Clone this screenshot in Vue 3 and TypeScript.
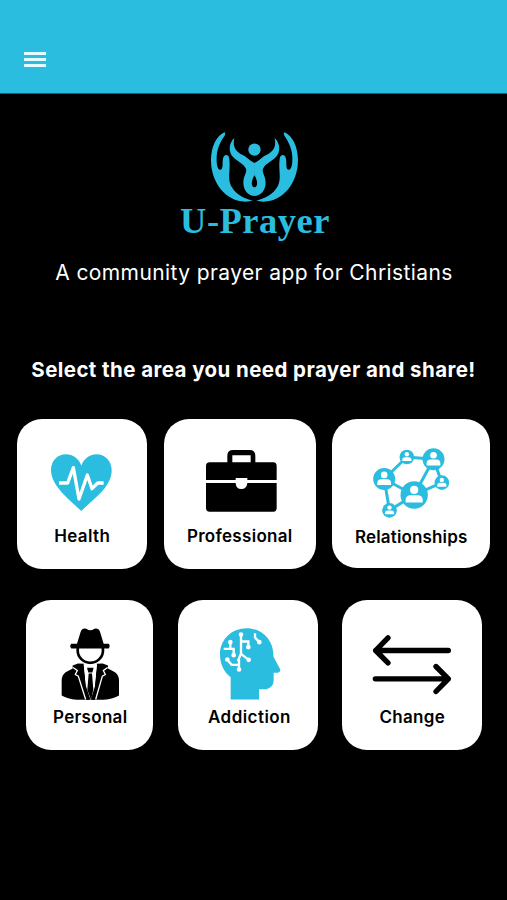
<script setup lang="ts">
interface Area {
  id: string
  label: string
  viewBox: string
}

const rows: Area[][] = [
  [
    { id: 'health', label: 'Health', viewBox: '84 105 270 228' },
    { id: 'professional', label: 'Professional', viewBox: '105 105 270 228' },
    { id: 'relationships', label: 'Relationships', viewBox: '124.5 106 270 228' },
  ],
  [
    { id: 'personal', label: 'Personal', viewBox: '88 106.5 270 228' },
    { id: 'addiction', label: 'Addiction', viewBox: '98 106.5 270 228' },
    { id: 'change', label: 'Change', viewBox: '97 106.5 270 228' },
  ],
]

const links: number[][] = [
  [179, 208, 247, 142],
  [247, 142, 327, 149],
  [327, 149, 352, 219],
  [327, 149, 269, 256],
  [352, 219, 269, 256],
  [179, 208, 269, 256],
  [179, 208, 195, 302],
  [195, 302, 269, 256],
]

const people: { x: number; y: number; r: number }[] = [
  { x: 247, y: 142, r: 22 },
  { x: 327, y: 149, r: 33 },
  { x: 179, y: 208, r: 33 },
  { x: 352, y: 219, r: 22 },
  { x: 269, y: 256, r: 41 },
  { x: 195, y: 302, r: 22 },
]
</script>

<template>
  <div class="screen">
    <header class="bar">
      <button class="menu" aria-label="Menu"><span /><span /><span /></button>
    </header>

    <main class="content">
      <div class="brand">
        <svg class="emblem" viewBox="120 34 268 216">
          <g v-for="side in 2" :key="side" :transform="side === 2 ? 'matrix(-1 0 0 1 507 0)' : undefined">
            <path d="M163 38C139 48 123 83 123 122C123 190 168 246 226 246Q240 246 248 242C222 237 195 222 183 198C172 177 182 149 178 119Q177 106 168 106Q159 107 158 124C158 142 157 151 150 150C142 149 139 132 140 111C141 81 157 59 165 46Q167 38 163 38Z" />
            <path d="M193 55C174 73 176 99 190 113C202 125 219 131 228 147C232 158 220 169 220 188C220 213 235 229 254.500 229V203C243 203 242 184 254.500 165V130C240 125 231 112 218 106C201 98 186 85 193 55Z" />
          </g>
          <circle cx="253.500" cy="90" r="18.500" />
        </svg>
        <h1 class="name">U-Prayer</h1>
      </div>
      <p class="tagline">A community prayer app for Christians</p>
      <h2 class="prompt">Select the area you need prayer and share!</h2>

      <nav class="areas">
        <div v-for="(row, i) in rows" :key="i" class="row">
          <button v-for="area in row" :key="area.id" class="card" :class="area.id">
            <svg class="icon" :viewBox="area.viewBox">
              <template v-if="area.id === 'health'">
                <path class="cyan" d="M217 303C193 281 164 257 146 232C131 211 126 194 126 180C126 153 145 133 171 133C192 133 209 146 217 167C225 146 242 133 263 133C289 133 308 154 308 181C308 205 296 225 280 243C262 263 237 282 217 303Z" />
                <path class="pulse" d="M150 219H176L193 173L210 267L235 195L249 236L266 219H284" />
              </template>
              <template v-else-if="area.id === 'professional'">
                <path d="M202 157V137Q202 120 219 120H269Q286 120 286 137V157H340Q350 157 350 168V210H262V204H227V210H138V168Q138 157 149 157ZM217 157H272V136H217Z" fill-rule="evenodd" />
                <path d="M138 219H227Q228 237 244 237Q260 237 262 219H350V294Q350 305 340 305H149Q138 305 138 294Z" />
              </template>
              <template v-else-if="area.id === 'relationships'">
                <line v-for="(l, n) in links" :key="'l' + n" class="link" :x1="l[0]" :y1="l[1]" :x2="l[2]" :y2="l[3]" />
                <g v-for="(p, n) in people" :key="'p' + n" :transform="`translate(${p.x} ${p.y}) scale(${p.r / 40})`">
                  <circle class="cyan" r="40" />
                  <circle class="white" cy="-15" r="12" />
                  <path class="white" d="M-25 22V15Q-25 1 -10 1H10Q25 1 25 15V22Z" />
                </g>
              </template>
              <template v-else-if="area.id === 'personal'">
                <circle cx="227" cy="179" r="38" class="face" />
                <path d="M170 160H187L198 124Q203 111 215 115Q227 124 239 115Q251 111 256 124L267 160H282Q288 166 282 174H170Q163 167 170 160Z" />
                <path d="M190 219L208 220L227 328H186Q158 325 141 315V269Q142 252 153 245L174 234V225Z" />
                <path d="M264 219L246 220L227 328H268Q296 325 313 315V269Q312 252 301 245L280 234V225Z" />
                <path class="white" d="M207 221H247L242 285L228 328L213 285Z" />
                <path d="M217 232H237L233 246H221ZM222 249H232L236 298L229 328L218 298Z" />
                <path d="M207 221L214 298L224 328H211L190 250ZM247 221L240 298L231 328H243L265 250Z" />
                <path class="seam" d="M175 231L188 240L182 252L191 257L213 327M279 231L266 240L272 252L263 257L243 327" />
                <path class="white" d="M207 222L217 222L214 282ZM237 222L247 222L240 282Z" />
              </template>
              <template v-else-if="area.id === 'addiction'">
                <path class="cyan" d="M181 327V260C160 244 149 219 149 191C149 147 184 113 229 113C274 113 307 147 309 190V198L330 237Q330 246 321 247H310V270Q309 291 288 296H266V327Z" />
                <g class="circuit">
                  <path d="M180 155V175M160 175H190V194M212 132V190L202 212M212 153H234V170M212 190L235 208M170 207L184 223H206V237M206 222V206M254 128V141L267 155" />
                  <circle cx="180" cy="155" r="3.500" /><circle cx="190" cy="194" r="3.500" />
                  <circle cx="212" cy="132" r="3.500" /><circle cx="234" cy="170" r="3.500" />
                  <circle cx="235" cy="208" r="3.500" /><circle cx="171" cy="207" r="3.500" />
                  <circle cx="206" cy="237" r="3.500" /><circle cx="267" cy="155" r="3.500" />
                </g>
              </template>
              <path v-else class="arrows" d="M341 180H123M160 142L123 180L160 217M122 265H341M304 228L341 265L304 303" />
            </svg>
            <span class="label">{{ area.label }}</span>
          </button>
        </div>
      </nav>
    </main>
  </div>
</template>

<style>
body {
  margin: 0;
  background: #000;
}
</style>

<style scoped>
.screen {
  box-sizing: border-box;
  width: 507px;
  height: 900px;
  overflow: hidden;
  background: #000;
  color: #fff;
  font-family: Inter, "Liberation Sans", sans-serif;
}
.bar {
  box-sizing: border-box;
  height: 94px;
  padding: 52px 0 0 24px;
  background: #2bbddf;
  border-bottom: 1px solid #126577;
}
.menu {
  display: flex;
  flex-direction: column;
  gap: 3px;
  width: 22px;
  padding: 0;
  border: 0;
  background: none;
}
.menu span {
  height: 3px;
  background: #e4fbff;
}
.content {
  display: flex;
  flex-direction: column;
  align-items: center;
}
.brand {
  display: flex;
  flex-direction: column;
  align-items: center;
  height: 148px;
  padding-top: 37px;
  margin-left: 2px;
}
.emblem {
  flex: none;
  width: 89.3px;
  height: 72px;
  fill: #2bbddf;
}
.name {
  margin: -2px 0 0;
  padding-left: 1px;
  color: #2bbddf;
  font: bold 36.5px/40px "Liberation Serif", serif;
  letter-spacing: 0.5px;
}
.tagline {
  margin: -20px 0 0;
  padding-left: 1px;
  font-size: 21px;
  line-height: 28px;
  letter-spacing: 0.4px;
  white-space: nowrap;
}
.prompt {
  margin: 69px 0 0;
  font-size: 20.5px;
  font-weight: 700;
  line-height: 28px;
  letter-spacing: 0.42px;
  white-space: nowrap;
}
.areas {
  display: flex;
  flex-direction: column;
  align-items: center;
  gap: 30.5px;
  margin-top: 35px;
  padding-left: 0.5px;
}
.row {
  display: flex;
  justify-content: center;
  gap: 16.5px;
}
.row + .row {
  gap: 24.75px;
  padding-left: 0.5px;
}
.card {
  display: flex;
  flex-direction: column;
  align-items: center;
  box-sizing: border-box;
  width: 140px;
  height: 150px;
  padding: 26px 0 0;
  border: 0;
  border-radius: 25px;
  background: #fff;
  color: #000;
  font-family: inherit;
}
.health {
  width: 130px;
}
.professional {
  width: 152px;
}
.relationships {
  width: 158px;
  height: 149px;
}
.personal {
  width: 127px;
}
.icon {
  flex: none;
  width: 90px;
  height: 76px;
}
.label {
  margin-top: 4px;
  font-size: 17px;
  font-weight: 600;
  line-height: 22px;
  letter-spacing: 0.3px;
}
.health .label {
  letter-spacing: 0.4px;
}
.relationships .label {
  margin-top: 5px;
  letter-spacing: 0.15px;
}
.addiction .label {
  padding-left: 4px;
  letter-spacing: 0.45px;
}
.personal .label {
  padding-left: 2px;
}
.cyan {
  fill: #2bbddf;
}
.white {
  fill: #fff;
}
.pulse {
  fill: none;
  stroke: #fff;
  stroke-width: 10;
  stroke-linejoin: round;
}
.link {
  stroke: #2bbddf;
  stroke-width: 9;
}
.face {
  fill: #fff;
  stroke: #000;
  stroke-width: 8;
}
.seam {
  fill: none;
  stroke: #fff;
  stroke-width: 4;
}
.circuit {
  fill: #fff;
  stroke: #fff;
  stroke-width: 7;
}
.circuit path {
  fill: none;
}
.arrows {
  fill: none;
  stroke: #000;
  stroke-width: 16;
  stroke-linecap: round;
  stroke-linejoin: round;
}
</style>
